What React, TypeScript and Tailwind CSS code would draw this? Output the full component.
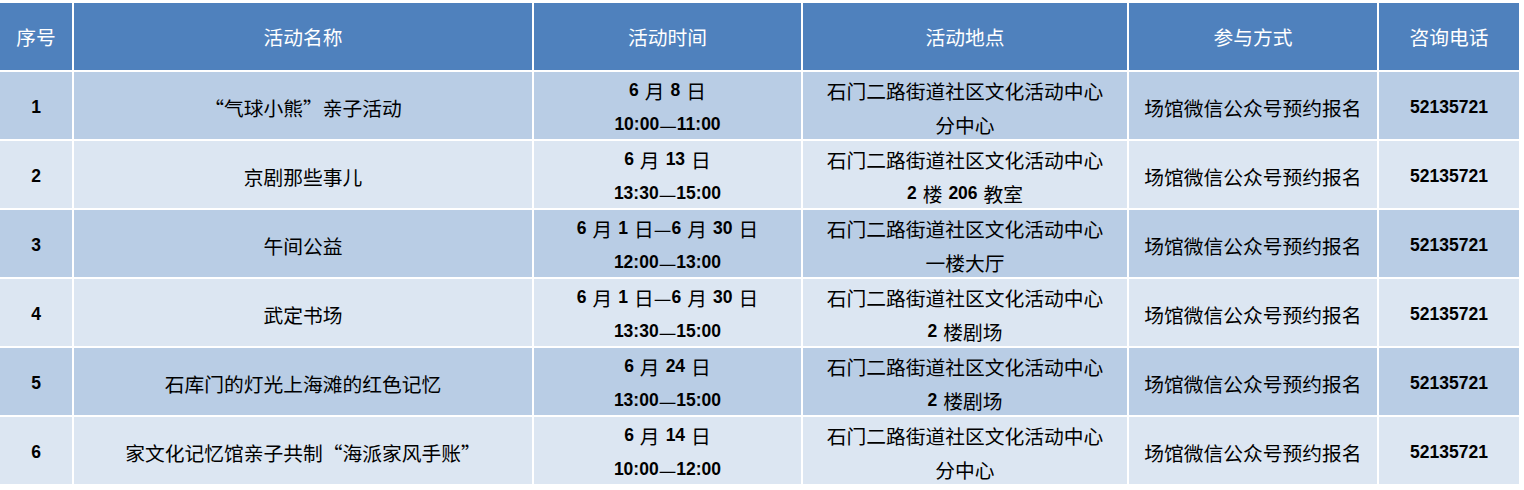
import React from "react";

type Row = { n: string; name: string; time: string[]; place: string[] };

const rows: Row[] = [
  { n: "1", name: "“气球小熊”亲子活动", time: ["6 月 8 日", "10:00—11:00"], place: ["石门二路街道社区文化活动中心", "分中心"] },
  { n: "2", name: "京剧那些事儿", time: ["6 月 13 日", "13:30—15:00"], place: ["石门二路街道社区文化活动中心", "2 楼 206 教室"] },
  { n: "3", name: "午间公益", time: ["6 月 1 日—6 月 30 日", "12:00—13:00"], place: ["石门二路街道社区文化活动中心", "一楼大厅"] },
  { n: "4", name: "武定书场", time: ["6 月 1 日—6 月 30 日", "13:30—15:00"], place: ["石门二路街道社区文化活动中心", "2 楼剧场"] },
  { n: "5", name: "石库门的灯光上海滩的红色记忆", time: ["6 月 24 日", "13:00—15:00"], place: ["石门二路街道社区文化活动中心", "2 楼剧场"] },
  { n: "6", name: "家文化记忆馆亲子共制“海派家风手账”", time: ["6 月 14 日", "10:00—12:00"], place: ["石门二路街道社区文化活动中心", "分中心"] },
];

const headers = ["序号", "活动名称", "活动时间", "活动地点", "参与方式", "咨询电话"];

function Mixed({ text }: { text: string }) {
  const parts = text.split(/([0-9:]+| )/).filter((p) => p !== "");
  return (
    <>
      {parts.map((p, i) =>
        p === " " ? (
          <span key={i} className="inline-block w-[6px]">
            {"\u00a0"}
          </span>
        ) : /^[0-9:]+$/.test(p) ? (
          <span key={i} className="font-['Liberation_Sans'] font-bold text-[17.5px] leading-none">
            {p}
          </span>
        ) : (
          <span key={i}>{p}</span>
        )
      )}
    </>
  );
}

function Cell({ bg, children }: { bg: string; children: React.ReactNode }) {
  return (
    <div className={`${bg} flex flex-col items-center justify-center pt-[5px] text-center leading-[34px]`}>
      {children}
    </div>
  );
}

function Line({ children }: { children: React.ReactNode }) {
  return <div className="h-[34px] shrink-0 flex items-center justify-center whitespace-nowrap">{children}</div>;
}

export default function App() {
  return (
    <div className="w-[1524px] h-[490px] bg-white pt-[3px] font-['Noto_Sans_CJK_SC',sans-serif] text-[19.75px] text-black">
      <div className="grid w-[1519px] grid-cols-[72px_458px_267px_324px_248px_140px] auto-rows-[67px] gap-[2px] bg-white">
        {headers.map((h) => (
          <div key={h} className="bg-[#4f81bd] flex items-center justify-center text-white">
            {h}
          </div>
        ))}
        {rows.map((r, idx) => {
          const bg = idx % 2 === 0 ? "bg-[#b9cde5]" : "bg-[#dce6f2]";
          return (
            <React.Fragment key={r.n}>
              <Cell bg={bg}>
                <Line>
                  <Mixed text={r.n} />
                </Line>
              </Cell>
              <Cell bg={bg}>
                <Line>{r.name}</Line>
              </Cell>
              <Cell bg={bg}>
                {r.time.map((t, i) => (
                  <Line key={i}>
                    <Mixed text={t} />
                  </Line>
                ))}
              </Cell>
              <Cell bg={bg}>
                {r.place.map((t, i) => (
                  <Line key={i}>
                    <Mixed text={t} />
                  </Line>
                ))}
              </Cell>
              <Cell bg={bg}>
                <Line>场馆微信公众号预约报名</Line>
              </Cell>
              <Cell bg={bg}>
                <Line>
                  <Mixed text="52135721" />
                </Line>
              </Cell>
            </React.Fragment>
          );
        })}
      </div>
    </div>
  );
}
